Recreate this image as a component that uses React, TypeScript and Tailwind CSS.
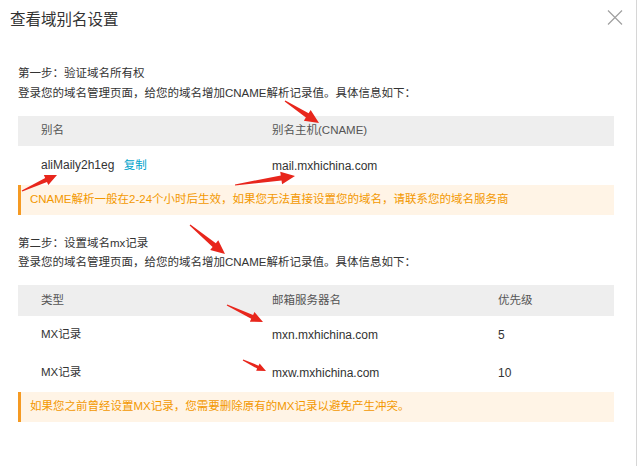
import React from 'react'

type Arrow = { x1: number; y1: number; x2: number; y2: number; head: number }

// red annotation arrows drawn over the dialog (tail -> tip)
const ARROWS: Arrow[] = [
  { x1: 285, y1: 101, x2: 319, y2: 123, head: 14 },
  { x1: 22, y1: 191, x2: 57, y2: 175, head: 12 },
  { x1: 235, y1: 185, x2: 295, y2: 176, head: 14 },
  { x1: 190, y1: 225, x2: 225, y2: 254, head: 14 },
  { x1: 227, y1: 305, x2: 263, y2: 322, head: 12 },
  { x1: 243, y1: 360, x2: 266, y2: 371, head: 9 },
]

function arrowPoints({ x1, y1, x2, y2, head }: Arrow) {
  const dx = x2 - x1
  const dy = y2 - y1
  const len = Math.hypot(dx, dy)
  const ux = dx / len
  const uy = dy / len
  const nx = -uy
  const ny = ux
  const bx = x2 - ux * head
  const by = y2 - uy * head
  const hw = head * 0.45
  const sw = head * 0.18
  const tw = 0.6
  const pts = [
    [x1 + nx * tw, y1 + ny * tw],
    [bx + nx * sw, by + ny * sw],
    [bx + nx * hw, by + ny * hw],
    [x2, y2],
    [bx - nx * hw, by - ny * hw],
    [bx - nx * sw, by - ny * sw],
    [x1 - nx * tw, y1 - ny * tw],
  ]
  return pts.map((p) => p.join(',')).join(' ')
}

function Notice({ children }: { children: React.ReactNode }) {
  return (
    <div className="h-[30px] flex items-center pl-[9px] border-l-[3px] border-[#f59a23] bg-[#fff4e6] text-[#f39800]">
      {children}
    </div>
  )
}

const cols = 'grid grid-cols-[231px_226px_1fr] pl-[23px] items-center'

export default function App() {
  return (
    <div
      className="relative w-[640px] h-[466px] bg-white text-[11.5px] text-[#333]"
      style={{ fontFamily: '"Liberation Sans", Arial, "Noto Sans CJK SC", sans-serif' }}
    >
      <div className="w-[637px] h-full border-r border-[#d6d6d6]">
        <div className="h-[40px] flex items-center justify-between pl-[10px] pr-[13px]">
          <h1 className="text-[15.5px] text-[#333] leading-none">查看域别名设置</h1>
          <svg width="16" height="15" viewBox="0 0 16 15" className="mb-[5px]">
            <path d="M1 0.5 L15 14.5 M15 0.5 L1 14.5" stroke="#a0a0a0" strokeWidth="1.2" fill="none" />
          </svg>
        </div>

        <div className="pl-[18px] pr-[22px] pt-[24px]">
          <p className="leading-[18px]">第一步：验证域名所有权</p>
          <p className="leading-[18px] mt-[2px]">登录您的域名管理页面，给您的域名增加CNAME解析记录值。具体信息如下：</p>

          <div className={`${cols} h-[30px] bg-[#eeeeee] text-[#555] mt-[14px]`}>
            <span>别名</span>
            <span>别名主机(CNAME)</span>
          </div>
          <div className={`${cols} h-[39px] text-[12px]`}>
            <span>
              aliMaily2h1eg <span className="ml-[6px] text-[11.5px] text-[#00a3cc]">复制</span>
            </span>
            <span>mail.mxhichina.com</span>
          </div>
          <Notice>CNAME解析一般在2-24个小时后生效，如果您无法直接设置您的域名，请联系您的域名服务商</Notice>

          <p className="leading-[18px] mt-[19px]">第二步：设置域名mx记录</p>
          <p className="leading-[18px] mt-[1px]">登录您的域名管理页面，给您的域名增加CNAME解析记录值。具体信息如下：</p>

          <div className={`${cols} h-[31px] bg-[#eeeeee] text-[#555] mt-[14px]`}>
            <span>类型</span>
            <span>邮箱服务器名</span>
            <span>优先级</span>
          </div>
          <div className={`${cols} h-[38px]`}>
            <span>MX记录</span>
            <span className="text-[12px]">mxn.mxhichina.com</span>
            <span className="text-[12px]">5</span>
          </div>
          <div className={`${cols} h-[38px]`}>
            <span>MX记录</span>
            <span className="text-[12px]">mxw.mxhichina.com</span>
            <span className="text-[12px]">10</span>
          </div>
          <Notice>如果您之前曾经设置MX记录，您需要删除原有的MX记录以避免产生冲突。</Notice>
        </div>
      </div>

      <svg className="absolute inset-0 pointer-events-none" width="640" height="466">
        {ARROWS.map((a, i) => (
          <polygon key={i} points={arrowPoints(a)} fill="#e8261c" />
        ))}
      </svg>
    </div>
  )
}
